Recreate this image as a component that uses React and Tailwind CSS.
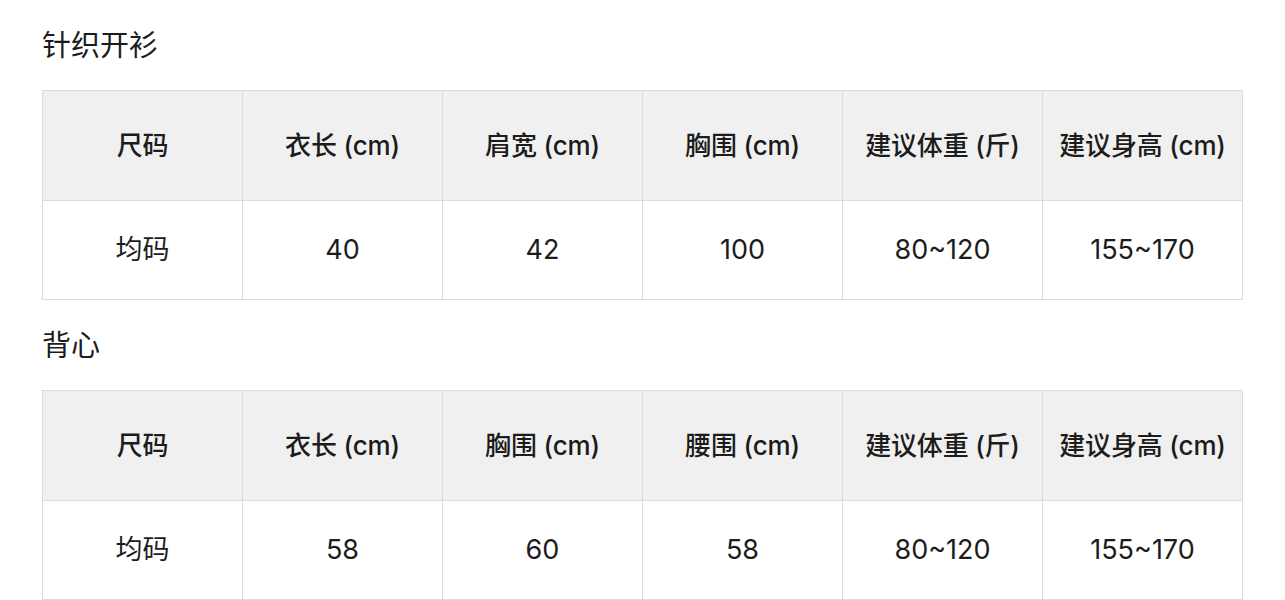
import React from "react";

const sections = [
  {
    title: "针织开衫",
    headers: ["尺码", "衣长 (cm)", "肩宽 (cm)", "胸围 (cm)", "建议体重 (斤)", "建议身高 (cm)"],
    row: ["均码", "40", "42", "100", "80~120", "155~170"],
  },
  {
    title: "背心",
    headers: ["尺码", "衣长 (cm)", "胸围 (cm)", "腰围 (cm)", "建议体重 (斤)", "建议身高 (cm)"],
    row: ["均码", "58", "60", "58", "80~120", "155~170"],
  },
];

export default function App() {
  return (
    <div
      className="bg-white px-[42px] text-[#1c1c1c]"
      style={{ fontFamily: 'Inter, "Noto Sans CJK SC", sans-serif' }}
    >
      {sections.map((s) => (
        <div key={s.title}>
          <h2 className="pt-[25px] pb-[23px] text-[29px] leading-[42px] font-normal">{s.title}</h2>
          <table className="border-collapse table-fixed w-[1200px]">
            <thead>
              <tr>
                {s.headers.map((h, i) => (
                  <th
                    key={i}
                    className="w-[200px] h-[110px] border border-[#dcdcdc] bg-[#f0f0f0] text-center align-middle text-[26px] tracking-[-0.2px] font-medium p-0 whitespace-nowrap"
                  >
                    {h}
                  </th>
                ))}
              </tr>
            </thead>
            <tbody>
              <tr>
                {s.row.map((c, i) => (
                  <td
                    key={i}
                    className="w-[200px] h-[99px] border border-[#dcdcdc] text-center align-middle text-[27px] font-normal p-0"
                  >
                    {c}
                  </td>
                ))}
              </tr>
            </tbody>
          </table>
        </div>
      ))}
    </div>
  );
}
